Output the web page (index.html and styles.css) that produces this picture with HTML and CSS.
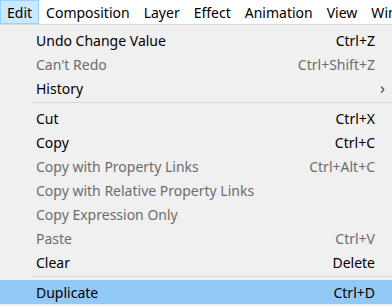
FILE: index.html
```html
<!DOCTYPE html>
<html lang="en">
<head>
    <meta charset="UTF-8">
    <title>Edit menu</title>
    <link rel="stylesheet" href="styles.css">
</head>
<body>
    <div class="barra">
        <span class="titulo ativo">Edit</span>
        <span class="titulo">Composition</span>
        <span class="titulo">Layer</span>
        <span class="titulo">Effect</span>
        <span class="titulo">Animation</span>
        <span class="titulo">View</span>
        <span class="titulo">Window</span>
    </div>
    <div class="menu">
        <div class="item"><span>Undo Change Value</span><span class="atalho">Ctrl+Z</span></div>
        <div class="item off"><span>Can't Redo</span><span class="atalho">Ctrl+Shift+Z</span></div>
        <div class="item"><span>History</span><span class="seta">&rsaquo;</span></div>
        <div class="sep"></div>
        <div class="item"><span>Cut</span><span class="atalho">Ctrl+X</span></div>
        <div class="item"><span>Copy</span><span class="atalho">Ctrl+C</span></div>
        <div class="item off"><span>Copy with Property Links</span><span class="atalho">Ctrl+Alt+C</span></div>
        <div class="item off"><span>Copy with Relative Property Links</span></div>
        <div class="item off"><span>Copy Expression Only</span></div>
        <div class="item off"><span>Paste</span><span class="atalho">Ctrl+V</span></div>
        <div class="item"><span>Clear</span><span class="atalho">Delete</span></div>
        <div class="sep"></div>
        <div class="item marcado"><span>Duplicate</span><span class="atalho">Ctrl+D</span></div>
    </div>
</body>
</html>
```

FILE: styles.css
```css
* {
    margin: 0;
    padding: 0;
    box-sizing: border-box;
}
body {
    width: 392px;
    height: 306px;
    overflow: hidden;
    font-family: "Noto Sans", "Open Sans", sans-serif;
    font-size: 14px;
    color: #000;
    background-color: #f0f0f0;
}
.barra {
    display: flex;
    height: 25px;
    background-color: #fff;
    border-bottom: 1px solid #d9d9d9;
    white-space: nowrap;
    overflow: hidden;
}
.titulo {
    padding: 0 6px 0 6px;
    line-height: 23px;
    height: 24px;
    border: 1px solid transparent;
}
.titulo.ativo {
    background-color: #cce8ff;
    border-color: #99d1ff;
}
.menu {
    padding-top: 3px;
}
.item {
    display: flex;
    justify-content: space-between;
    align-items: center;
    height: 24px;
    padding: 0 17px 0 36px;
}
.item.off {
    color: #6d6d6d;
}
.item.marcado {
    background-color: #91c9f7;
}
.seta {
    margin-right: -10px;
    font-size: 16px;
    color: #444;
}
.sep {
    height: 6px;
    margin-left: 32px;
    padding-top: 2px;
}
.sep::after {
    content: "";
    display: block;
    height: 1px;
    background-color: #d7d7d7;
}
```
